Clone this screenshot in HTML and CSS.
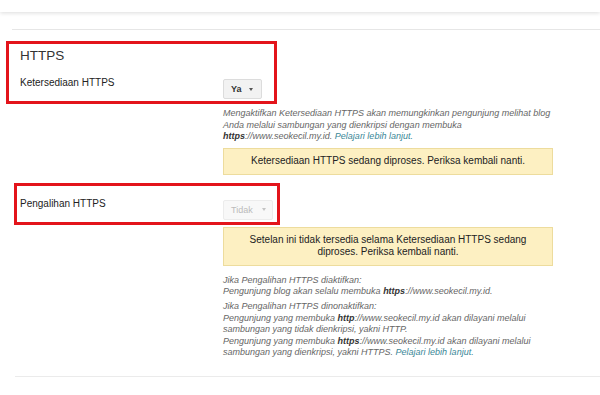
FILE: index.html
```html
<!DOCTYPE html>
<html lang="id">
<head>
<meta charset="utf-8">
<title>HTTPS</title>
<link rel="stylesheet" href="styles.css">
</head>
<body>
<div class="page">
  <div class="topbar"></div>
  <section class="settings">
    <h2 class="settings-title">HTTPS</h2>

    <div class="setting-row row-availability">
      <div class="setting-label">Ketersediaan HTTPS</div>
      <div class="setting-control">
        <div class="dropdown"><span>Ya</span><span class="caret"></span></div>
        <p class="hint hint-after-button">Mengaktifkan Ketersediaan HTTPS akan memungkinkan pengunjung melihat blog Anda melalui sambungan yang dienkripsi dengan membuka <b>https</b>://www.seokecil.my.id. <a class="link">Pelajari lebih lanjut.</a></p>
        <div class="notice notice-after-hint">Ketersediaan HTTPS sedang diproses. Periksa kembali nanti.</div>
      </div>
    </div>

    <div class="setting-row row-redirect">
      <div class="setting-label">Pengalihan HTTPS</div>
      <div class="setting-control">
        <div class="dropdown dropdown-disabled"><span>Tidak</span><span class="caret"></span></div>
        <div class="notice notice-after-button">Setelan ini tidak tersedia selama Ketersediaan HTTPS sedang diproses. Periksa kembali nanti.</div>
        <p class="hint hint-after-notice">Jika Pengalihan HTTPS diaktifkan:<br>Pengunjung blog akan selalu membuka <b>https</b>://www.seokecil.my.id.</p>
        <p class="hint hint-next">Jika Pengalihan HTTPS dinonaktifkan:<br>Pengunjung yang membuka <b>http</b>://www.seokecil.my.id akan dilayani melalui sambungan yang tidak dienkripsi, yakni HTTP.<br>Pengunjung yang membuka <b>https</b>://www.seokecil.my.id akan dilayani melalui sambungan yang dienkripsi, yakni HTTPS. <a class="link">Pelajari lebih lanjut.</a></p>
      </div>
    </div>
  </section>
  <div class="divider"></div>

  <div class="annot annot-1"></div>
  <div class="annot annot-2"></div>
</div>
</body>
</html>
```
FILE: styles.css
```css
html, body {
  margin: 0;
  background: #ffffff;
}

body {
  font-family: "Liberation Sans", Arial, sans-serif;
  color: #222222;
}

.page {
  position: relative;
  width: 600px;
  height: 395px;
  overflow: hidden;
}

.topbar {
  height: 12px;
  background: #ffffff;
  box-shadow: 0 1px 4px rgba(0, 0, 0, 0.14);
}

.settings {
  margin: 17px 0 0 12px;
  border-top: 1px solid #e6e6e6;
  padding-left: 8px;
}

.settings-title {
  margin: 17px 0 0;
  font-size: 13.5px;
  line-height: 18px;
  font-weight: normal;
  color: #333333;
}

.setting-row {
  display: grid;
  grid-template-columns: 203px 340px;
}

.row-availability {
  margin-top: 11px;
}

.row-redirect {
  margin-top: 22px;
}

.setting-label {
  font-size: 10px;
  line-height: 14px;
  color: #222222;
}

.dropdown {
  display: flex;
  align-items: center;
  gap: 7px;
  width: max-content;
  height: 20px;
  box-sizing: border-box;
  margin-top: 3px;
  padding: 0 8px 0 7px;
  border: 1px solid #dcdcdc;
  border-radius: 2px;
  background: #f2f2f2;
  font-size: 9px;
  font-weight: bold;
  color: #333333;
}

.caret {
  width: 0;
  height: 0;
  border-left: 2.5px solid transparent;
  border-right: 2.5px solid transparent;
  border-top: 3px solid #555555;
}

.dropdown-disabled {
  gap: 9px;
  padding-right: 6px;
  border-color: #ececec;
  background: #f8f8f8;
  font-weight: normal;
  color: #bbbbbb;
}

.dropdown-disabled .caret {
  border-top-color: #c4c4c4;
}

.hint {
  width: 340px;
  margin: 0;
  font-style: italic;
  font-size: 9px;
  line-height: 11.6px;
  color: #666666;
}

.hint b {
  color: #333333;
}

.link {
  color: #3a8797;
}

.hint-after-button {
  margin-top: 9px;
}

.hint-after-notice {
  margin-top: 9px;
}

.hint-next {
  margin-top: 3px;
}

.notice {
  width: 330px;
  box-sizing: border-box;
  padding: 6px 20px 7px;
  border: 1px solid #eddc9d;
  background: #fdf0c2;
  text-align: center;
  font-size: 10px;
  line-height: 12px;
  color: #222222;
}

.notice-after-hint {
  margin-top: 5px;
}

.notice-after-button {
  margin-top: 7px;
}

.divider {
  margin: 17px 0 0 15px;
  border-top: 1px solid #ebebeb;
}

.annot {
  position: absolute;
  box-sizing: border-box;
  border: 3px solid #e3141b;
}

.annot-1 {
  left: 6px;
  top: 41px;
  width: 271px;
  height: 63px;
}

.annot-2 {
  left: 14px;
  top: 183px;
  width: 266px;
  height: 42px;
}
```
